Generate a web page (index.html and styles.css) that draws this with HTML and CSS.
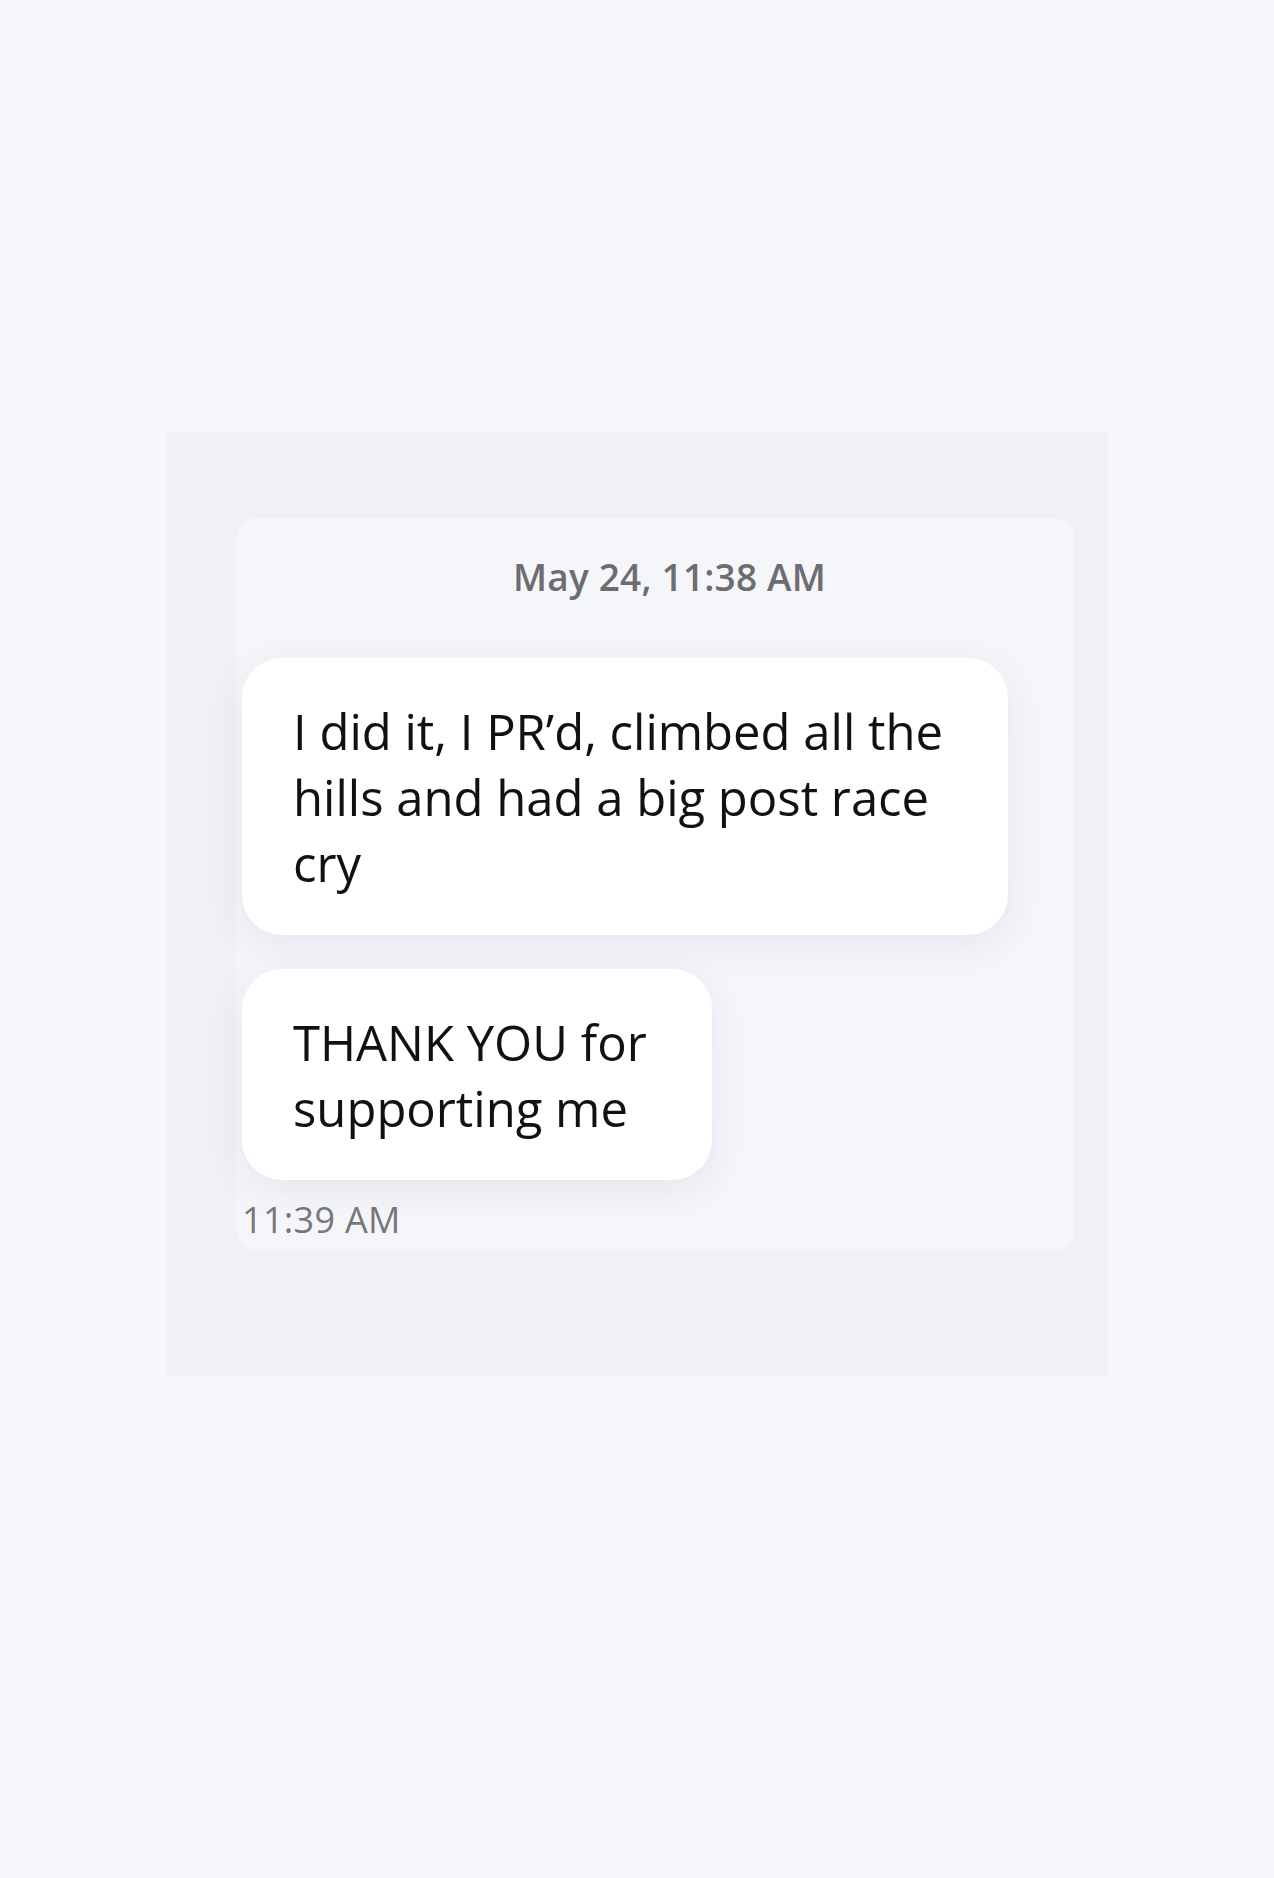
FILE: index.html
```html
<!DOCTYPE html>
<html lang="en">
<head>
<meta charset="utf-8">
<title>Messages</title>
<link rel="stylesheet" href="styles.css">
</head>
<body>
<main class="page">
  <section class="panel">
    <div class="card">
      <div class="date">May 24, 11:38 AM</div>
      <div class="thread">
        <div class="bubble bubble-wide">I did it, I PR’d, climbed all the hills and had a big post race cry</div>
        <div class="bubble bubble-narrow">THANK YOU for supporting me</div>
      </div>
      <div class="time">11:39 AM</div>
    </div>
  </section>
</main>
</body>
</html>
```

FILE: styles.css
```css
html, body {
  margin: 0;
  padding: 0;
}
body {
  background: #f6f7fb;
  font-family: "Open Sans", "Noto Sans", "Liberation Sans", sans-serif;
  width: 1274px;
  height: 1878px;
  overflow: hidden;
}
.page {
  padding-top: 432px;
  display: flex;
  justify-content: center;
}
.panel {
  box-sizing: border-box;
  width: 942px;
  height: 944px;
  background: #f0f1f6;
  padding: 86px 33px 125px 70px;
}
.card {
  box-sizing: border-box;
  height: 733px;
  background: #f5f6fa;
  border-radius: 22px;
  padding: 34px 0 0 6px;
}
.date {
  font-size: 37px;
  font-weight: 600;
  color: #6d6d71;
  line-height: 50px;
  padding-left: 271px;
  margin-bottom: 56px;
  letter-spacing: 0.2px;
}
.thread {
  display: flex;
  flex-direction: column;
  align-items: flex-start;
  gap: 34px;
}
.bubble {
  box-sizing: border-box;
  background: #ffffff;
  border-radius: 40px;
  padding: 40px 48px 39px 51px;
  font-size: 49px;
  line-height: 66px;
  color: #111114;
  box-shadow: 0 10px 38px rgba(40, 50, 90, 0.08);
}
.bubble-wide {
  width: 766px;
}
.bubble-narrow {
  width: 470px;
}
.time {
  margin-top: 16px;
  font-size: 36px;
  line-height: 48px;
  font-weight: 400;
  color: #77777b;
  letter-spacing: 0.3px;
}
```
